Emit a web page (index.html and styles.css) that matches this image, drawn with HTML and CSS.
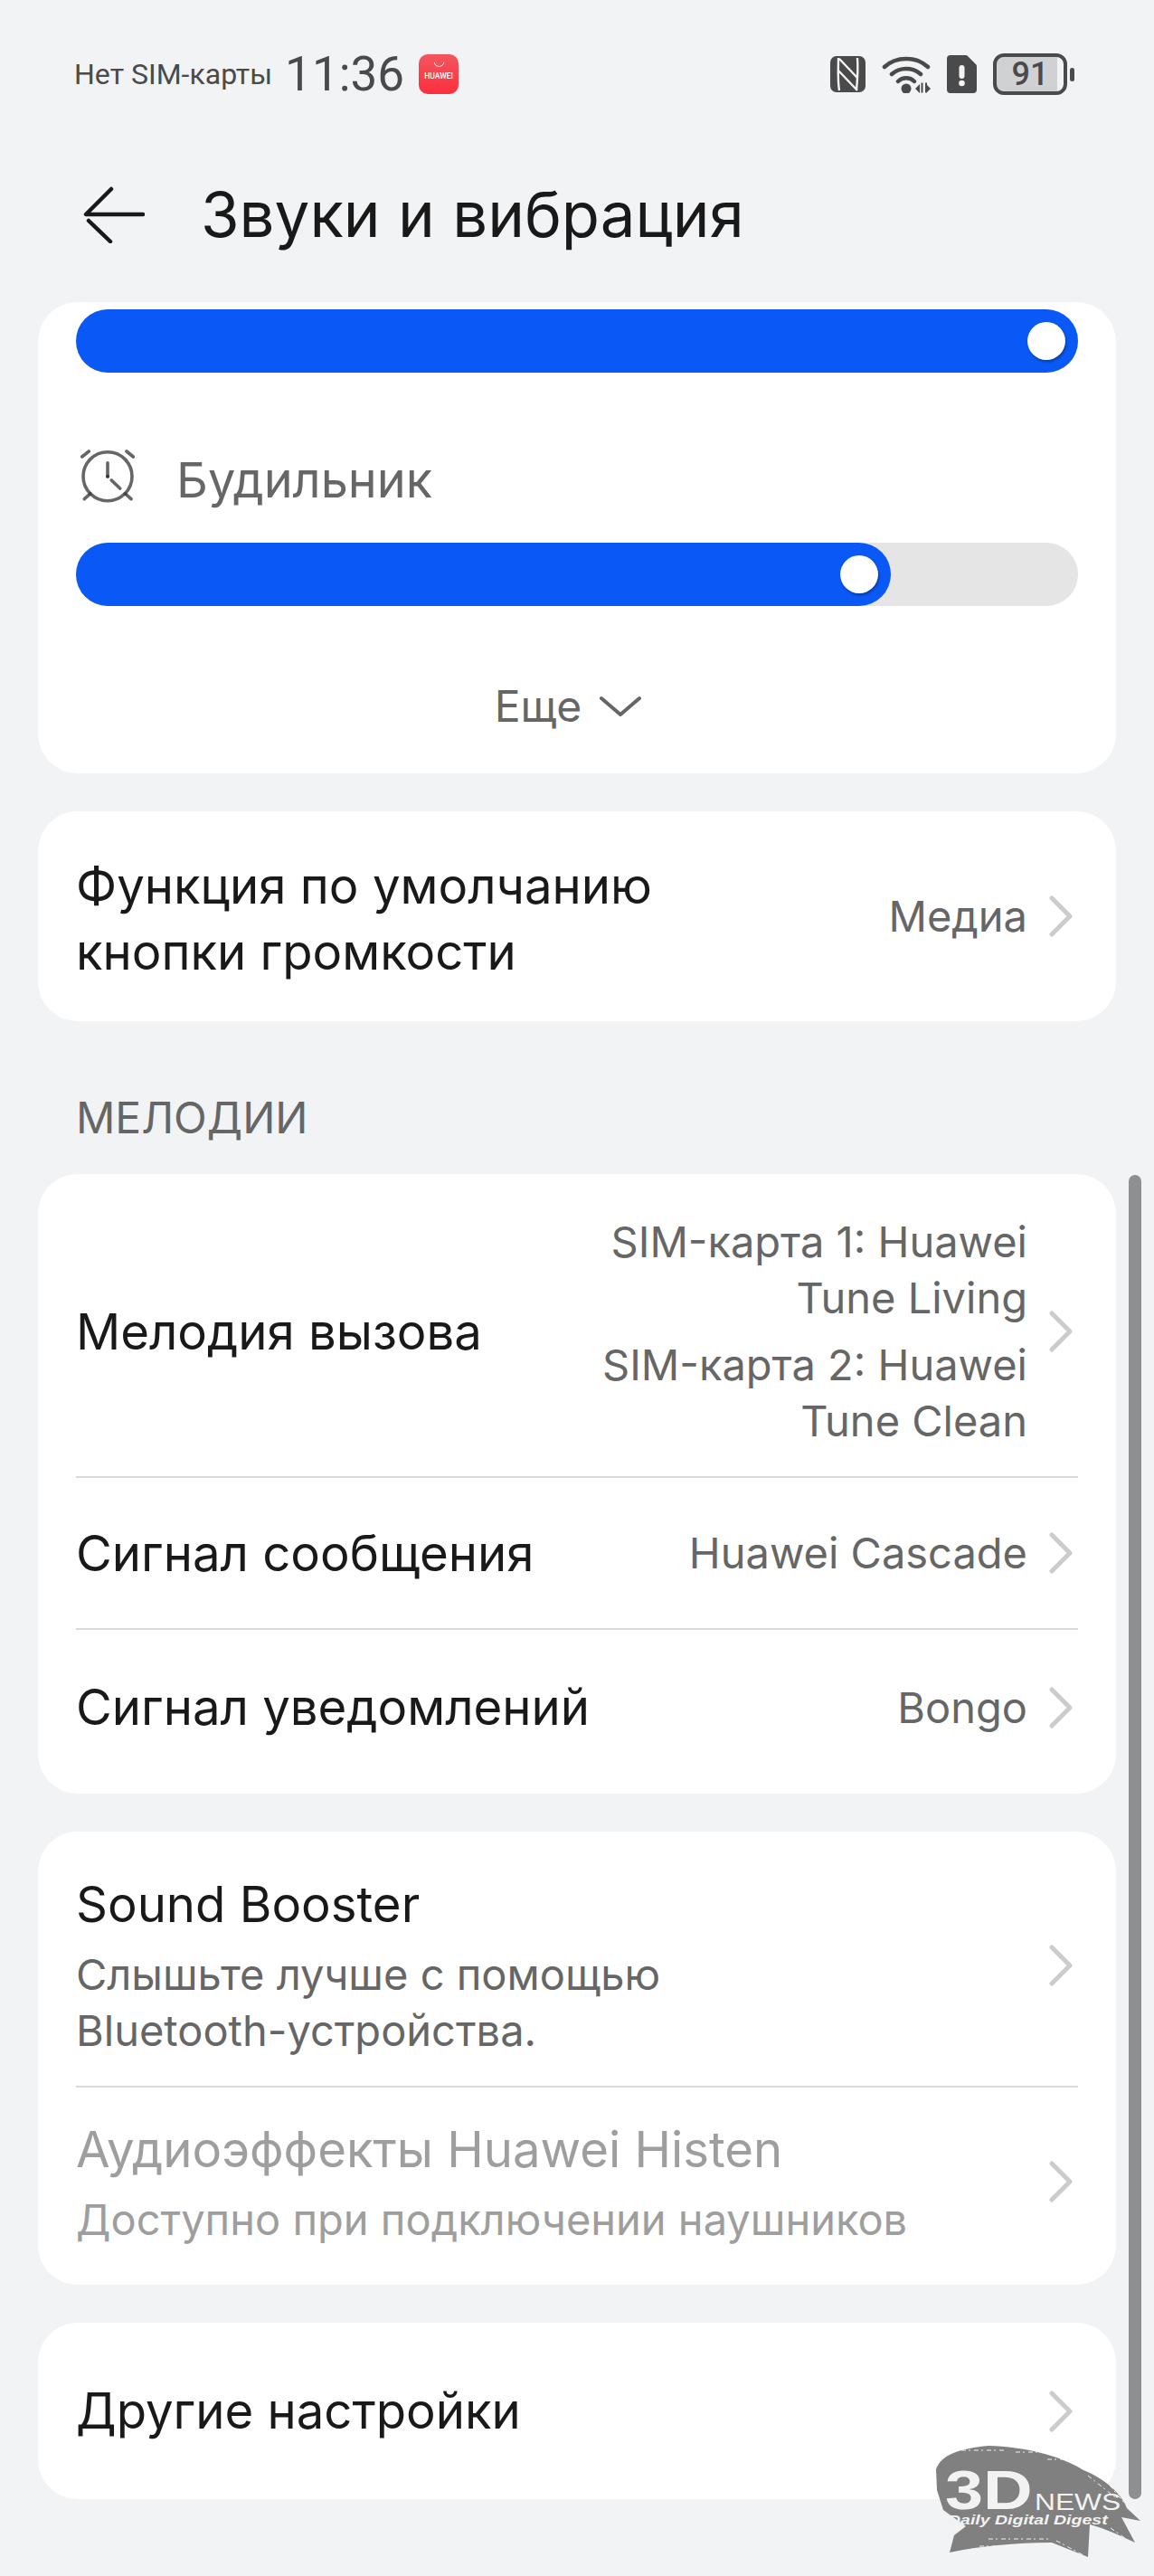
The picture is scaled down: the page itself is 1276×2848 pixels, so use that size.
FILE: index.html
```html
<!DOCTYPE html>
<html lang="ru">
<head>
    <meta charset="UTF-8">
    <meta name="viewport" content="width=device-width, initial-scale=1.0">
    <title>Звуки и вибрация</title>
    <link rel="stylesheet" href="styles.css">
</head>
<body>
    <header class="status">
        <div class="status-left">
            <span class="sim">Нет SIM-карты</span>
            <span class="time">11:36</span>
            <span class="app-badge">
                <svg class="app-smile" viewBox="0 0 14 8"><path d="M1 1c.6 7 11.400 7 12 0" fill="none" stroke="#fff" stroke-width="1"/></svg>
                <span class="app-name">HUAWEI</span>
            </span>
        </div>
        <div class="status-right">
            <svg class="ic-nfc" viewBox="0 0 39 40">
                <rect width="39" height="40" rx="7" fill="#4a4a4a"/>
                <path d="M9 2c0 12-1 25 1 36M10 3l20 21M9 16l21 22M30 2c1 12 0 25-1 36" fill="none" stroke="#f1f3f5" stroke-width="2.400"/>
            </svg>
            <svg class="ic-wifi" viewBox="0 0 54 42">
                <path d="M3 13C16 1 38 1 51 13M11 21c9-8 23-8 32 0M18 29c5-5 13-5 18 0" fill="none" stroke="#4a4a4a" stroke-width="4.500" stroke-linecap="round"/>
                <circle cx="27" cy="37" r="5.500" fill="#4a4a4a"/>
                <path d="M37 37l5-5v10zM43.500 30.500h2v11h-2zM48 30.500h2v11h-2zM50 33l4 4-4 4z" fill="#4a4a4a"/>
            </svg>
            <svg class="ic-sim" viewBox="0 0 33 42">
                <path d="M4 0h17a3 3 0 0 1 2 1l9 9a3 3 0 0 1 1 2v26a4 4 0 0 1-4 4H4a4 4 0 0 1-4-4V4a4 4 0 0 1 4-4z" fill="#4a4a4a"/>
                <rect x="13.500" y="11" width="6" height="15" rx="3" fill="#f1f3f5"/>
                <circle cx="16.500" cy="31" r="3.300" fill="#f1f3f5"/>
            </svg>
            <div class="battery">
                <div class="battery-body"><span class="battery-level">91</span></div>
                <div class="battery-cap"></div>
            </div>
        </div>
    </header>

    <div class="titlebar">
        <svg class="ic-back" viewBox="0 0 68 63">
            <path d="M31 3L3 31h63M6 38l24 23" fill="none" stroke="#191919" stroke-width="4.500" stroke-linecap="round" stroke-linejoin="round"/>
        </svg>
        <h1>Звуки и вибрация</h1>
    </div>

    <main class="content">
        <section class="card card-volume">
            <div class="slider"><div class="slider-fill full"><span class="thumb"></span></div></div>
            <div class="volume-label">
                <svg class="ic-alarm" viewBox="0 0 60 60">
                    <circle cx="30" cy="29.700" r="27" fill="none" stroke="#666" stroke-width="3.600"/>
                    <path d="M30 14.700v15M34.300 34l9.400 9M1.700 8l7.600-6M51 2l7.300 6M4.300 54.700L11 48.700M49.300 48.700l6.700 6" fill="none" stroke="#666" stroke-width="3.600" stroke-linecap="round"/>
                    <circle cx="30" cy="29.700" r="2" fill="#333"/>
                    <circle cx="10.500" cy="49" r="2" fill="#444"/>
                    <circle cx="49.500" cy="49" r="2" fill="#444"/>
                </svg>
                <span>Будильник</span>
            </div>
            <div class="slider"><div class="slider-fill alarm"><span class="thumb"></span></div></div>
            <div class="more">
                <span>Еще</span>
                <svg class="ic-down" viewBox="0 0 46 24"><path d="M2 3l21 18L44 3" fill="none" stroke="#666" stroke-width="4" stroke-linecap="round" stroke-linejoin="round"/></svg>
            </div>
        </section>

        <section class="card">
            <div class="row row-buttons">
                <div class="row-title">Функция по умолчанию<br>кнопки громкости</div>
                <div class="row-value">Медиа</div>
                <svg class="chevron" viewBox="0 0 26 46"><path d="M3 3l20 20L3 43" fill="none" stroke="#ccc" stroke-width="5" stroke-linecap="round" stroke-linejoin="round"/></svg>
            </div>
        </section>

        <h2 class="section-title">МЕЛОДИИ</h2>

        <section class="card">
            <div class="row row-call divided">
                <div class="row-title">Мелодия вызова</div>
                <div class="row-value">
                    <p>SIM-карта 1: Huawei<br>Tune Living</p>
                    <p>SIM-карта 2: Huawei<br>Tune Clean</p>
                </div>
                <svg class="chevron" viewBox="0 0 26 46"><path d="M3 3l20 20L3 43" fill="none" stroke="#ccc" stroke-width="5" stroke-linecap="round" stroke-linejoin="round"/></svg>
            </div>
            <div class="row row-msg divided">
                <div class="row-title">Сигнал сообщения</div>
                <div class="row-value">Huawei Cascade</div>
                <svg class="chevron" viewBox="0 0 26 46"><path d="M3 3l20 20L3 43" fill="none" stroke="#ccc" stroke-width="5" stroke-linecap="round" stroke-linejoin="round"/></svg>
            </div>
            <div class="row row-notify">
                <div class="row-title">Сигнал уведомлений</div>
                <div class="row-value">Bongo</div>
                <svg class="chevron" viewBox="0 0 26 46"><path d="M3 3l20 20L3 43" fill="none" stroke="#ccc" stroke-width="5" stroke-linecap="round" stroke-linejoin="round"/></svg>
            </div>
        </section>

        <section class="card">
            <div class="row row-booster divided">
                <div class="row-main">
                    <div class="row-title">Sound Booster</div>
                    <div class="row-sub">Слышьте лучше с помощью<br>Bluetooth-устройства.</div>
                </div>
                <svg class="chevron" viewBox="0 0 26 46"><path d="M3 3l20 20L3 43" fill="none" stroke="#ccc" stroke-width="5" stroke-linecap="round" stroke-linejoin="round"/></svg>
            </div>
            <div class="row row-histen disabled">
                <div class="row-main">
                    <div class="row-title">Аудиоэффекты Huawei Histen</div>
                    <div class="row-sub">Доступно при подключении наушников</div>
                </div>
                <svg class="chevron" viewBox="0 0 26 46"><path d="M3 3l20 20L3 43" fill="none" stroke="#ccc" stroke-width="5" stroke-linecap="round" stroke-linejoin="round"/></svg>
            </div>
        </section>

        <section class="card">
            <div class="row row-other">
                <div class="row-title">Другие настройки</div>
                <svg class="chevron" viewBox="0 0 26 46"><path d="M3 3l20 20L3 43" fill="none" stroke="#ccc" stroke-width="5" stroke-linecap="round" stroke-linejoin="round"/></svg>
            </div>
        </section>
    </main>

    <div class="scrollbar"></div>

    <div class="watermark">
        <svg class="brush" viewBox="0 0 228 128">
            <path d="M2 27C8 10 30 4 60 1c40 1 80 11 105 27 30 12 45 32 48 42l15 14-21-4 15 28-22-10-15-6-13-4-2 36-40-16c-40 0-80 4-113 11l5-19 13-10-25-18-7-22z" fill="#808080"/>
            <path d="M30 6h50M90 8h30M125 16h25M170 34l30 24M185 34l25 30M60 104h70M50 112h60M135 106l30 16M195 92l20 14" fill="none" stroke="#f1f3f5" stroke-width="1" stroke-dasharray="5 3 2 4"/>
        </svg>
        <span class="logo-3d">3D</span>
        <span class="logo-news">NEWS</span>
        <span class="logo-digest">Daily Digital Digest</span>
    </div>
</body>
</html>
```

FILE: styles.css
```css
* {
    box-sizing: border-box;
}
html, body {
    margin: 0;
    padding: 0;
}
body {
    position: relative;
    width: 1276px;
    height: 2848px;
    overflow: hidden;
    background-color: #f1f3f5;
    color: #191919;
    font-family: Inter, Roboto, sans-serif;
}
p, h1, h2 {
    margin: 0;
    font-weight: normal;
}

/* status bar */
.status {
    display: flex;
    justify-content: space-between;
    align-items: center;
    height: 164px;
    padding: 0 88px 0 82px;
    color: #4a4a4a;
    font-family: Roboto, sans-serif;
}
.status-left {
    display: flex;
    align-items: center;
}
.sim {
    font-size: 32px;
}
.time {
    margin-left: 14px;
    font-size: 53px;
}
.app-badge {
    display: flex;
    flex-direction: column;
    align-items: center;
    width: 44px;
    height: 44px;
    margin-left: 16px;
    padding-top: 8px;
    border-radius: 10px;
    background: linear-gradient(#f4565f, #fb2f3e);
}
.app-smile {
    width: 13px;
    height: 7px;
}
.app-name {
    margin-top: 5px;
    color: #fff;
    font-size: 8.5px;
    line-height: 9px;
    font-weight: 500;
}
.status-right {
    display: flex;
    align-items: center;
}
.ic-nfc {
    width: 39px;
    height: 40px;
}
.ic-wifi {
    width: 54px;
    height: 42px;
    margin-left: 18px;
}
.ic-sim {
    width: 33px;
    height: 42px;
    margin-left: 18px;
}
.battery {
    display: flex;
    align-items: center;
    margin-left: 18px;
}
.battery-body {
    width: 82px;
    height: 46px;
    border: 4px solid #4a4a4a;
    border-radius: 12px;
    background: linear-gradient(90deg, #d0d1d3 91%, transparent 91%);
    text-align: center;
    font-size: 36px;
    line-height: 38px;
    font-weight: 500;
}
.battery-cap {
    width: 5px;
    height: 15px;
    margin-left: 3px;
    border-radius: 3px;
    background-color: #4a4a4a;
}

/* title */
.titlebar {
    display: flex;
    align-items: center;
    height: 146px;
    padding-left: 92px;
}
.ic-back {
    width: 68px;
    height: 63px;
}
h1 {
    margin-left: 62px;
    font-size: 69px;
}

/* cards */
.content {
    display: flex;
    flex-direction: column;
    padding: 24px 42px 0;
}
.card {
    margin-bottom: 42px;
    border-radius: 44px;
    background-color: #fff;
}
.card-volume {
    height: 521px;
    padding: 8px 42px 0;
}
.slider {
    height: 70px;
    border-radius: 35px;
    background-color: #e5e5e5;
}
.slider-fill {
    position: relative;
    height: 70px;
    border-radius: 35px;
    background-color: #0a59f7;
}
.slider-fill.full {
    width: 100%;
}
.slider-fill.alarm {
    width: 901px;
}
.thumb {
    position: absolute;
    top: 14px;
    right: 14px;
    width: 42px;
    height: 42px;
    border-radius: 50%;
    background-color: #fff;
    box-shadow: 1px 2px 3px rgba(0, 0, 0, 0.35);
}
.volume-label {
    display: flex;
    align-items: center;
    height: 188px;
    padding: 48px 0 0 5px;
    color: #666;
    font-size: 54px;
}
.ic-alarm {
    width: 60px;
    height: 60px;
    margin: -6px 46px 0 0;
}
.more {
    display: flex;
    justify-content: center;
    align-items: center;
    height: 185px;
    padding: 36px 20px 0 0;
    color: #666;
    font-size: 48px;
}
.ic-down {
    width: 46px;
    height: 24px;
    margin-left: 20px;
}
.row {
    display: flex;
    align-items: center;
    position: relative;
    margin: 0 42px;
}
.row.divided {
    border-bottom: 2px solid #d9d9d9;
}
.row-main {
    flex: 1;
}
.row-title {
    flex: 1;
    font-size: 54.5px;
    line-height: 73px;
}
.row-value {
    color: #666;
    font-size: 47px;
    line-height: 62px;
    text-align: right;
}
.row-sub {
    margin-top: 10px;
    color: #666;
    font-size: 47px;
    line-height: 62px;
}
.chevron {
    width: 26px;
    height: 46px;
    margin: 0 6px 0 24px;
}
.disabled .row-title {
    color: #9e9e9e;
}
.disabled .row-sub {
    color: #9e9e9e;
}
.row-buttons {
    height: 232px;
}
.row-buttons .row-title {
    padding-top: 6px;
}
.section-title {
    margin: 24px 42px 0;
    height: 103px;
    color: #666;
    font-size: 48px;
    line-height: 82px;
}
.row-call {
    height: 336px;
    padding-top: 14px;
}
.row-call p + p {
    margin-top: 12px;
}
.row-msg {
    height: 168px;
}
.row-notify {
    height: 181px;
    padding-bottom: 10px;
}
.row-booster {
    height: 283px;
    padding-top: 14px;
}
.row-histen {
    height: 218px;
    padding-bottom: 10px;
}
.row-other {
    height: 195px;
}

/* overlays */
.scrollbar {
    position: absolute;
    top: 1299px;
    left: 1248px;
    width: 14px;
    height: 1464px;
    border-radius: 7px;
    background-color: #8e8f91;
}
.watermark {
    position: absolute;
    top: 2703px;
    left: 1033px;
    width: 228px;
    height: 128px;
    color: #f2f2f2;
    font-family: "Liberation Sans", sans-serif;
}
.brush {
    position: absolute;
    top: 0;
    left: 0;
    width: 228px;
    height: 128px;
}
.logo-3d {
    position: absolute;
    top: 27px;
    left: 12px;
    font-size: 62px;
    line-height: 46px;
    font-weight: bold;
    transform: scaleX(1.22);
    transform-origin: left;
}
.logo-news {
    position: absolute;
    top: 52px;
    left: 111px;
    font-size: 25px;
    line-height: 22px;
    transform: scaleX(1.27);
    transform-origin: left;
}
.logo-digest {
    position: absolute;
    top: 76px;
    left: 15px;
    font-size: 15px;
    line-height: 14px;
    font-weight: bold;
    font-style: italic;
    transform: scaleX(1.3);
    transform-origin: left;
}
```
